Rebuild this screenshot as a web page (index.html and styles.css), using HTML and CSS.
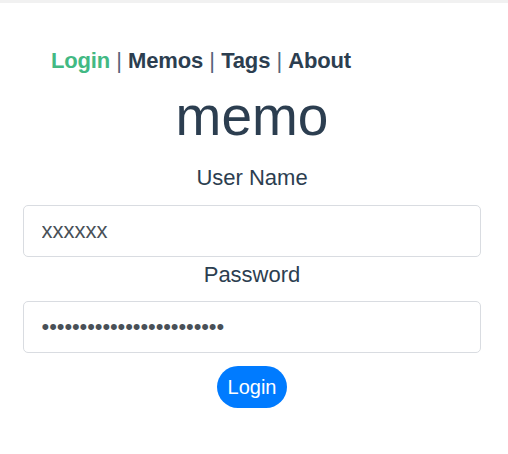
FILE: index.html
```html
<!DOCTYPE html>
<html lang="en">
<head>
<meta charset="utf-8">
<title>memo</title>
<link rel="stylesheet" href="styles.css">
</head>
<body>
<div class="topbar"></div>
<div class="app">
  <nav class="nav">
    <a class="nav-link active" href="#">Login</a> <span class="sep">|</span>
    <a class="nav-link" href="#">Memos</a> <span class="sep">|</span>
    <a class="nav-link" href="#">Tags</a> <span class="sep">|</span>
    <a class="nav-link" href="#">About</a>
  </nav>
  <main class="login">
    <h1 class="title">memo</h1>
    <form class="form">
      <label class="label label-user" for="user">User Name</label>
      <input class="field field-user" id="user" type="text" value="xxxxxx">
      <label class="label label-pass" for="pass">Password</label>
      <input class="field field-pass" id="pass" type="password" value="abcdefghijklmnopqrstuvwx">
      <div class="actions"><button class="btn" type="button">Login</button></div>
    </form>
  </main>
</div>
</body>
</html>
```

FILE: styles.css
```css
html, body {
  margin: 0;
  padding: 0;
  background: #ffffff;
}
body {
  font-family: "Liberation Sans", Arial, sans-serif;
  color: #2c3e50;
  font-size: 22px;
}
.topbar {
  height: 3px;
  background: #f1f1f1;
}
.nav {
  margin-top: 45px;
  padding-left: 51px;
  line-height: 26px;
  font-size: 22px;
}
.nav-link {
  font-weight: bold;
  color: #2c3e50;
  text-decoration: none;
  letter-spacing: -0.15px;
}
.nav-link.active {
  color: #42b983;
}
.sep {
  color: #56657a;
}
.login {
  margin-left: 23px;
  width: 458px;
  text-align: center;
}
.title {
  margin: 11px 0 0;
  font-size: 55px;
  font-weight: normal;
  line-height: 63px;
}
.form {
  display: flex;
  flex-direction: column;
  align-items: stretch;
}
.label {
  display: block;
  line-height: 26px;
  font-size: 22px;
}
.label-user {
  margin-top: 17px;
}
.label-pass {
  margin-top: 5px;
}
.field {
  box-sizing: border-box;
  height: 52px;
  margin: 14px 0 0;
  padding: 0 17.6px;
  border: 1px solid #d9dce1;
  border-radius: 5px;
  font-family: "Liberation Sans", Arial, sans-serif;
  font-size: 22px;
  color: #495057;
  background: #ffffff;
  outline: none;
}
.field-pass {
  margin-top: 13px;
  letter-spacing: -0.1px;
}
.actions {
  margin-top: 13px;
  display: flex;
  justify-content: center;
}
.btn {
  box-sizing: border-box;
  height: 42px;
  padding: 0 11px;
  border: none;
  border-radius: 21px;
  background: #007bff;
  color: #ffffff;
  font-family: "Liberation Sans", Arial, sans-serif;
  font-size: 20px;
  line-height: 23px;
}
```
